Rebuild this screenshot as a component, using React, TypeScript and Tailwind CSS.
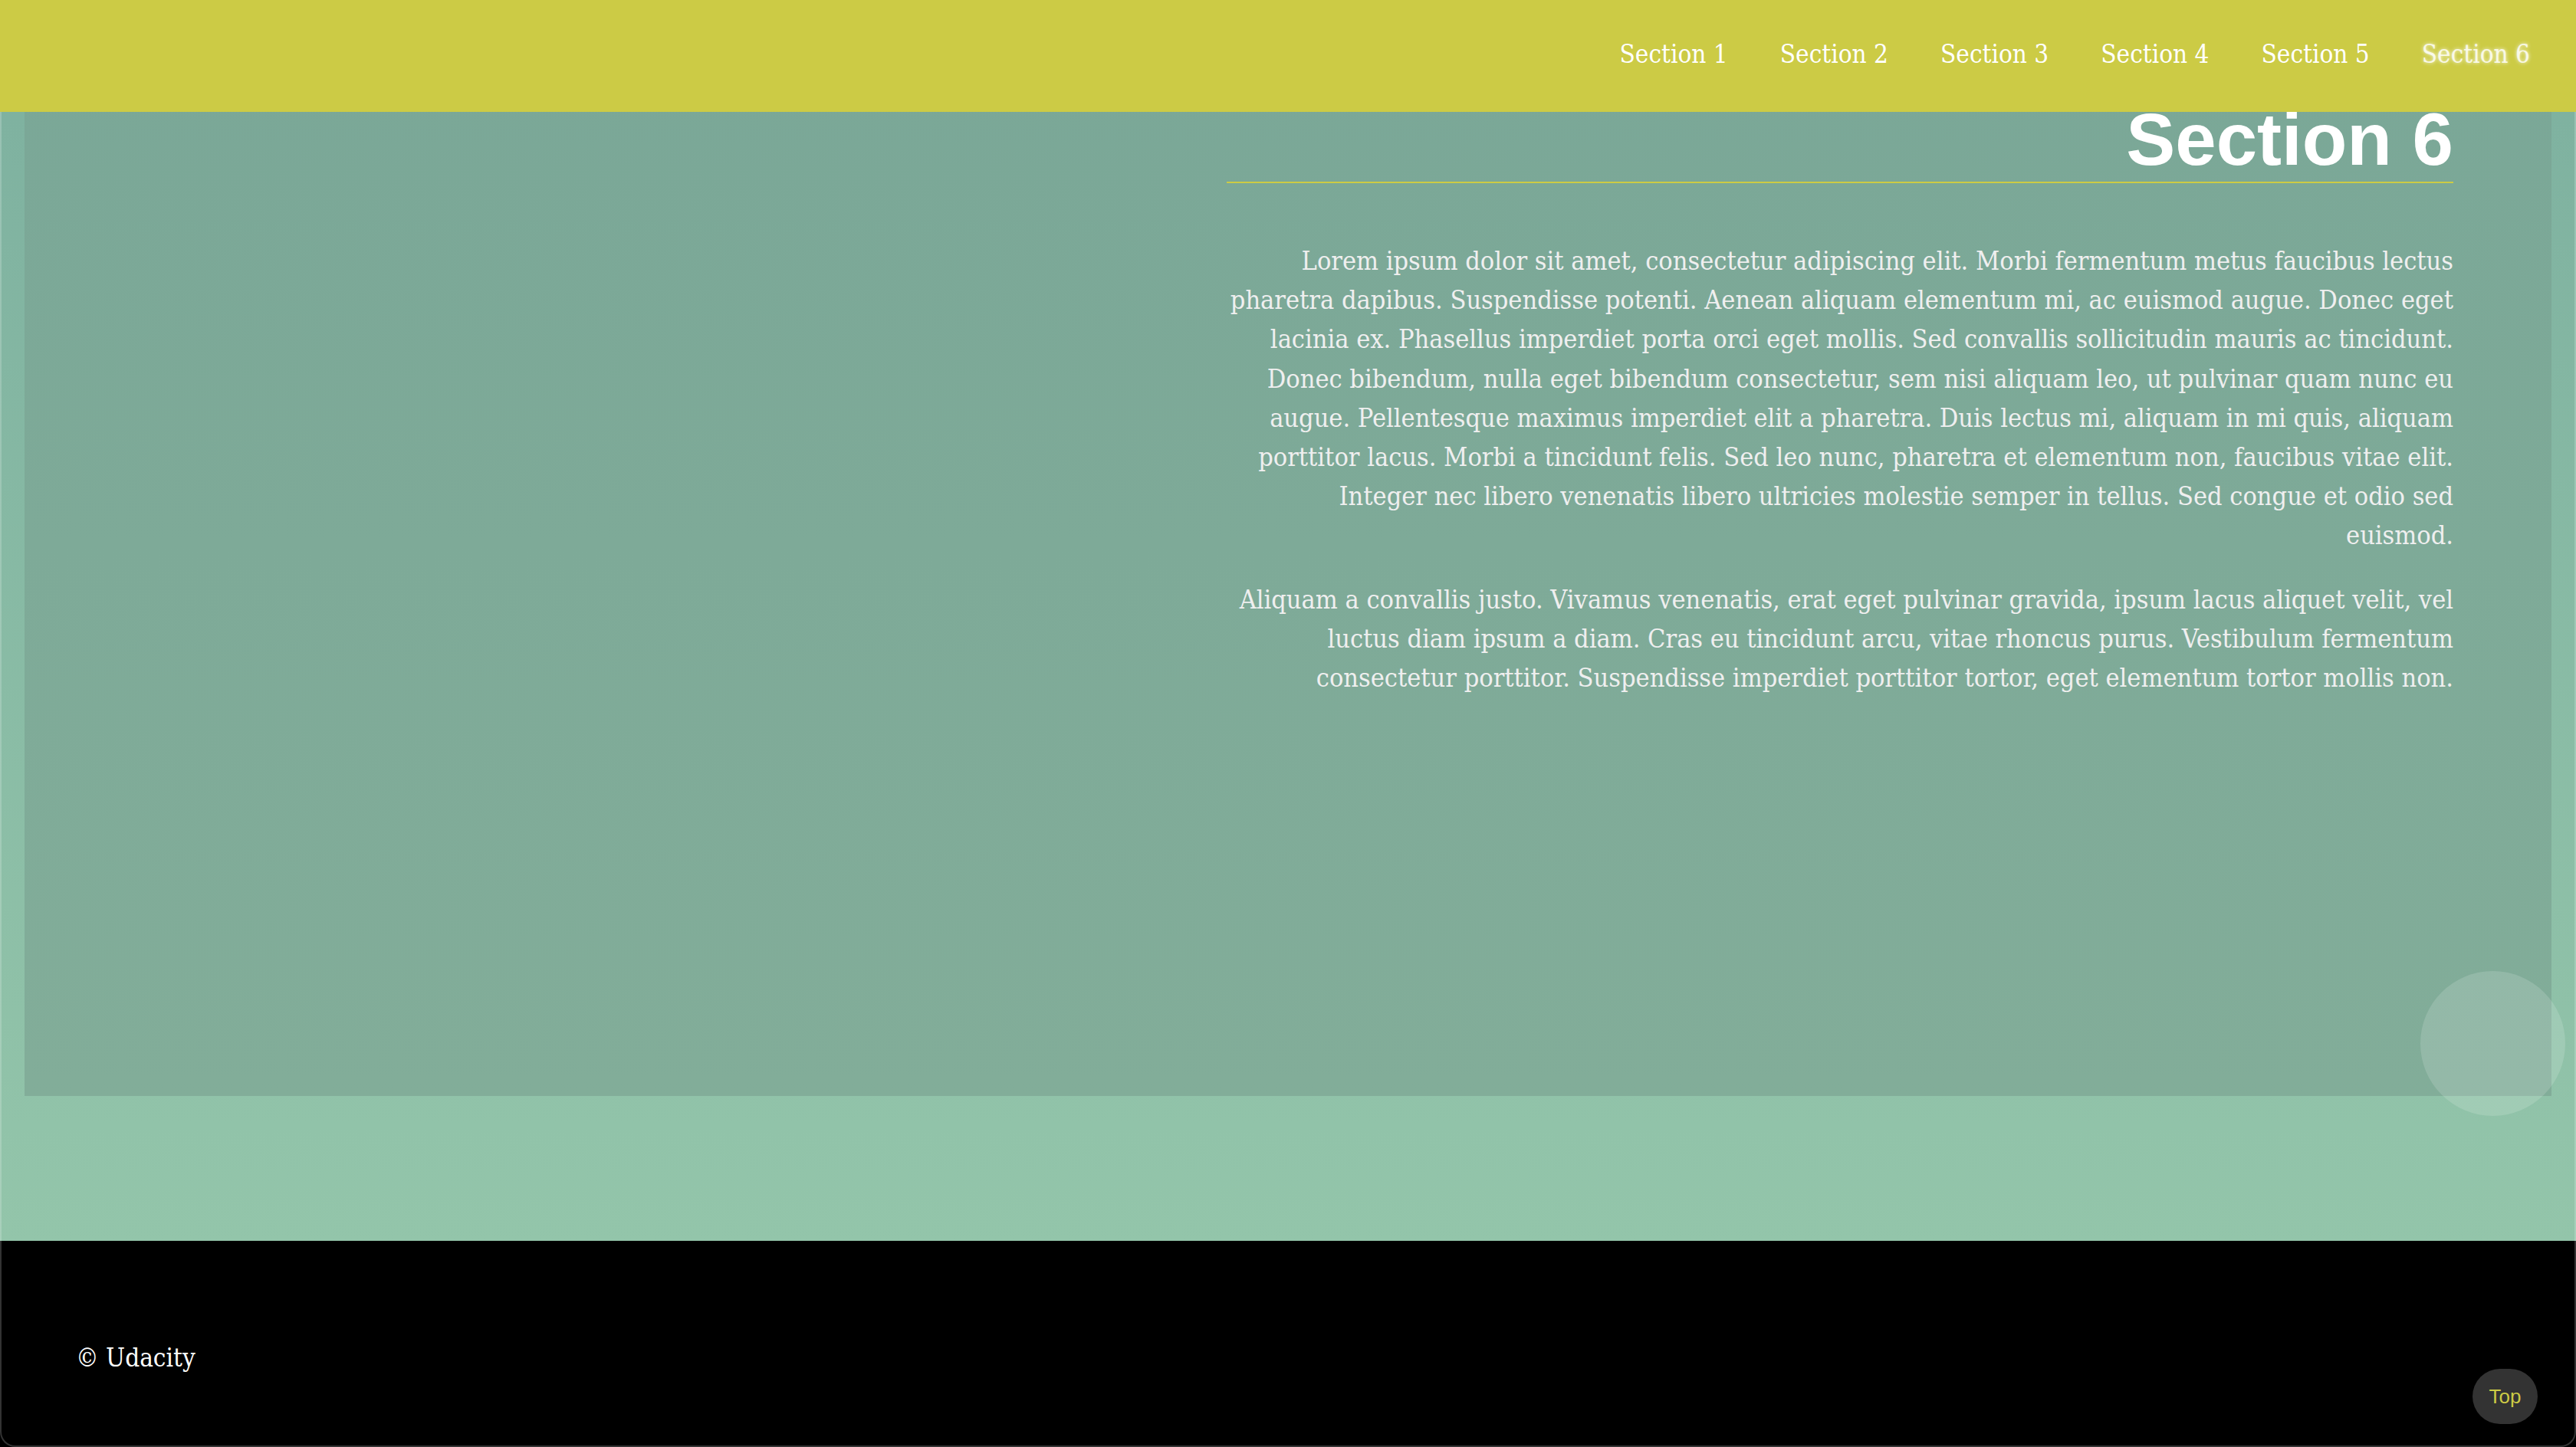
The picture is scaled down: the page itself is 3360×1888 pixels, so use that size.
const sections = ["Section 1", "Section 2", "Section 3", "Section 4", "Section 5", "Section 6"];

const serif = "font-['DejaVu_Serif_Condensed','DejaVu_Serif',serif] [font-stretch:condensed]";

// line breaks follow the reference so the ragged left edge matches
const paragraphs = [
  [
    "Lorem ipsum dolor sit amet, consectetur adipiscing elit. Morbi fermentum metus faucibus lectus",
    "pharetra dapibus. Suspendisse potenti. Aenean aliquam elementum mi, ac euismod augue. Donec eget",
    "lacinia ex. Phasellus imperdiet porta orci eget mollis. Sed convallis sollicitudin mauris ac tincidunt.",
    "Donec bibendum, nulla eget bibendum consectetur, sem nisi aliquam leo, ut pulvinar quam nunc eu",
    "augue. Pellentesque maximus imperdiet elit a pharetra. Duis lectus mi, aliquam in mi quis, aliquam",
    "porttitor lacus. Morbi a tincidunt felis. Sed leo nunc, pharetra et elementum non, faucibus vitae elit.",
    "Integer nec libero venenatis libero ultricies molestie semper in tellus. Sed congue et odio sed",
    "euismod.",
  ],
  [
    "Aliquam a convallis justo. Vivamus venenatis, erat eget pulvinar gravida, ipsum lacus aliquet velit, vel",
    "luctus diam ipsum a diam. Cras eu tincidunt arcu, vitae rhoncus purus. Vestibulum fermentum",
    "consectetur porttitor. Suspendisse imperdiet porttitor tortor, eget elementum tortor mollis non.",
  ],
];

export default function App() {
  return (
    <div className={`relative h-[1888px] w-[3360px] overflow-hidden ${serif}`}>
      <header className="absolute inset-x-0 top-0 z-10 h-[146px] bg-[#cccb45] pt-[51px] pr-[26px]">
        <ul className="flex justify-end">
          {sections.map((s) => {
            const active = s === "Section 6";
            return (
              <li key={s}>
                <a
                  href={`#${s}`}
                  className={
                    active
                      ? "block px-[34px] text-[33px] leading-[40px] text-white/80 [text-shadow:0_0_5px_rgba(255,255,255,0.9)]"
                      : "block px-[34px] text-[33px] leading-[40px] text-white"
                  }
                >
                  {s}
                </a>
              </li>
            );
          })}
        </ul>
      </header>

      <main className="bg-gradient-to-b from-[#7db09f] to-[#93c5aa] px-[32px] pb-[189px]">
        <section className="relative h-[1430px] bg-gradient-to-b from-[#7aa797] to-[#82ad99]">
          <div className="ml-auto mr-[128px] w-[1600px] pt-[127px] text-right">
            <h2 className="mb-[76px] border-b-2 border-[#cccb45] font-['Liberation_Sans',sans-serif] text-[96px] font-bold leading-[110px] text-white">
              Section 6
            </h2>
            <div className="flex flex-col gap-[32px]">
              {paragraphs.map((lines, i) => (
                <p key={i} className="whitespace-nowrap text-[34px] leading-[51.2px] text-[#efefef]">
                  {lines.map((line) => (
                    <span key={line} className="block">
                      {line}
                    </span>
                  ))}
                </p>
              ))}
            </div>
          </div>
          <div className="absolute left-[3125px] top-[1267px] h-[189px] w-[189px] rounded-full bg-white/15" />
        </section>
      </main>

      <footer className="h-[269px] bg-black pl-[99px] pt-[133px]">
        <p className="text-[33px] leading-[40px] text-white">© Udacity</p>
      </footer>

      <button className="absolute bottom-[30px] right-[50px] flex h-[72px] w-[85px] items-center justify-center rounded-full bg-[#333333] font-['Liberation_Sans',sans-serif] text-[26px] text-[#cccb45]">
        Top
      </button>

      <div className="pointer-events-none absolute inset-0 rounded-b-[20px] border-x-2 border-b-2 border-white/20" />
    </div>
  );
}
